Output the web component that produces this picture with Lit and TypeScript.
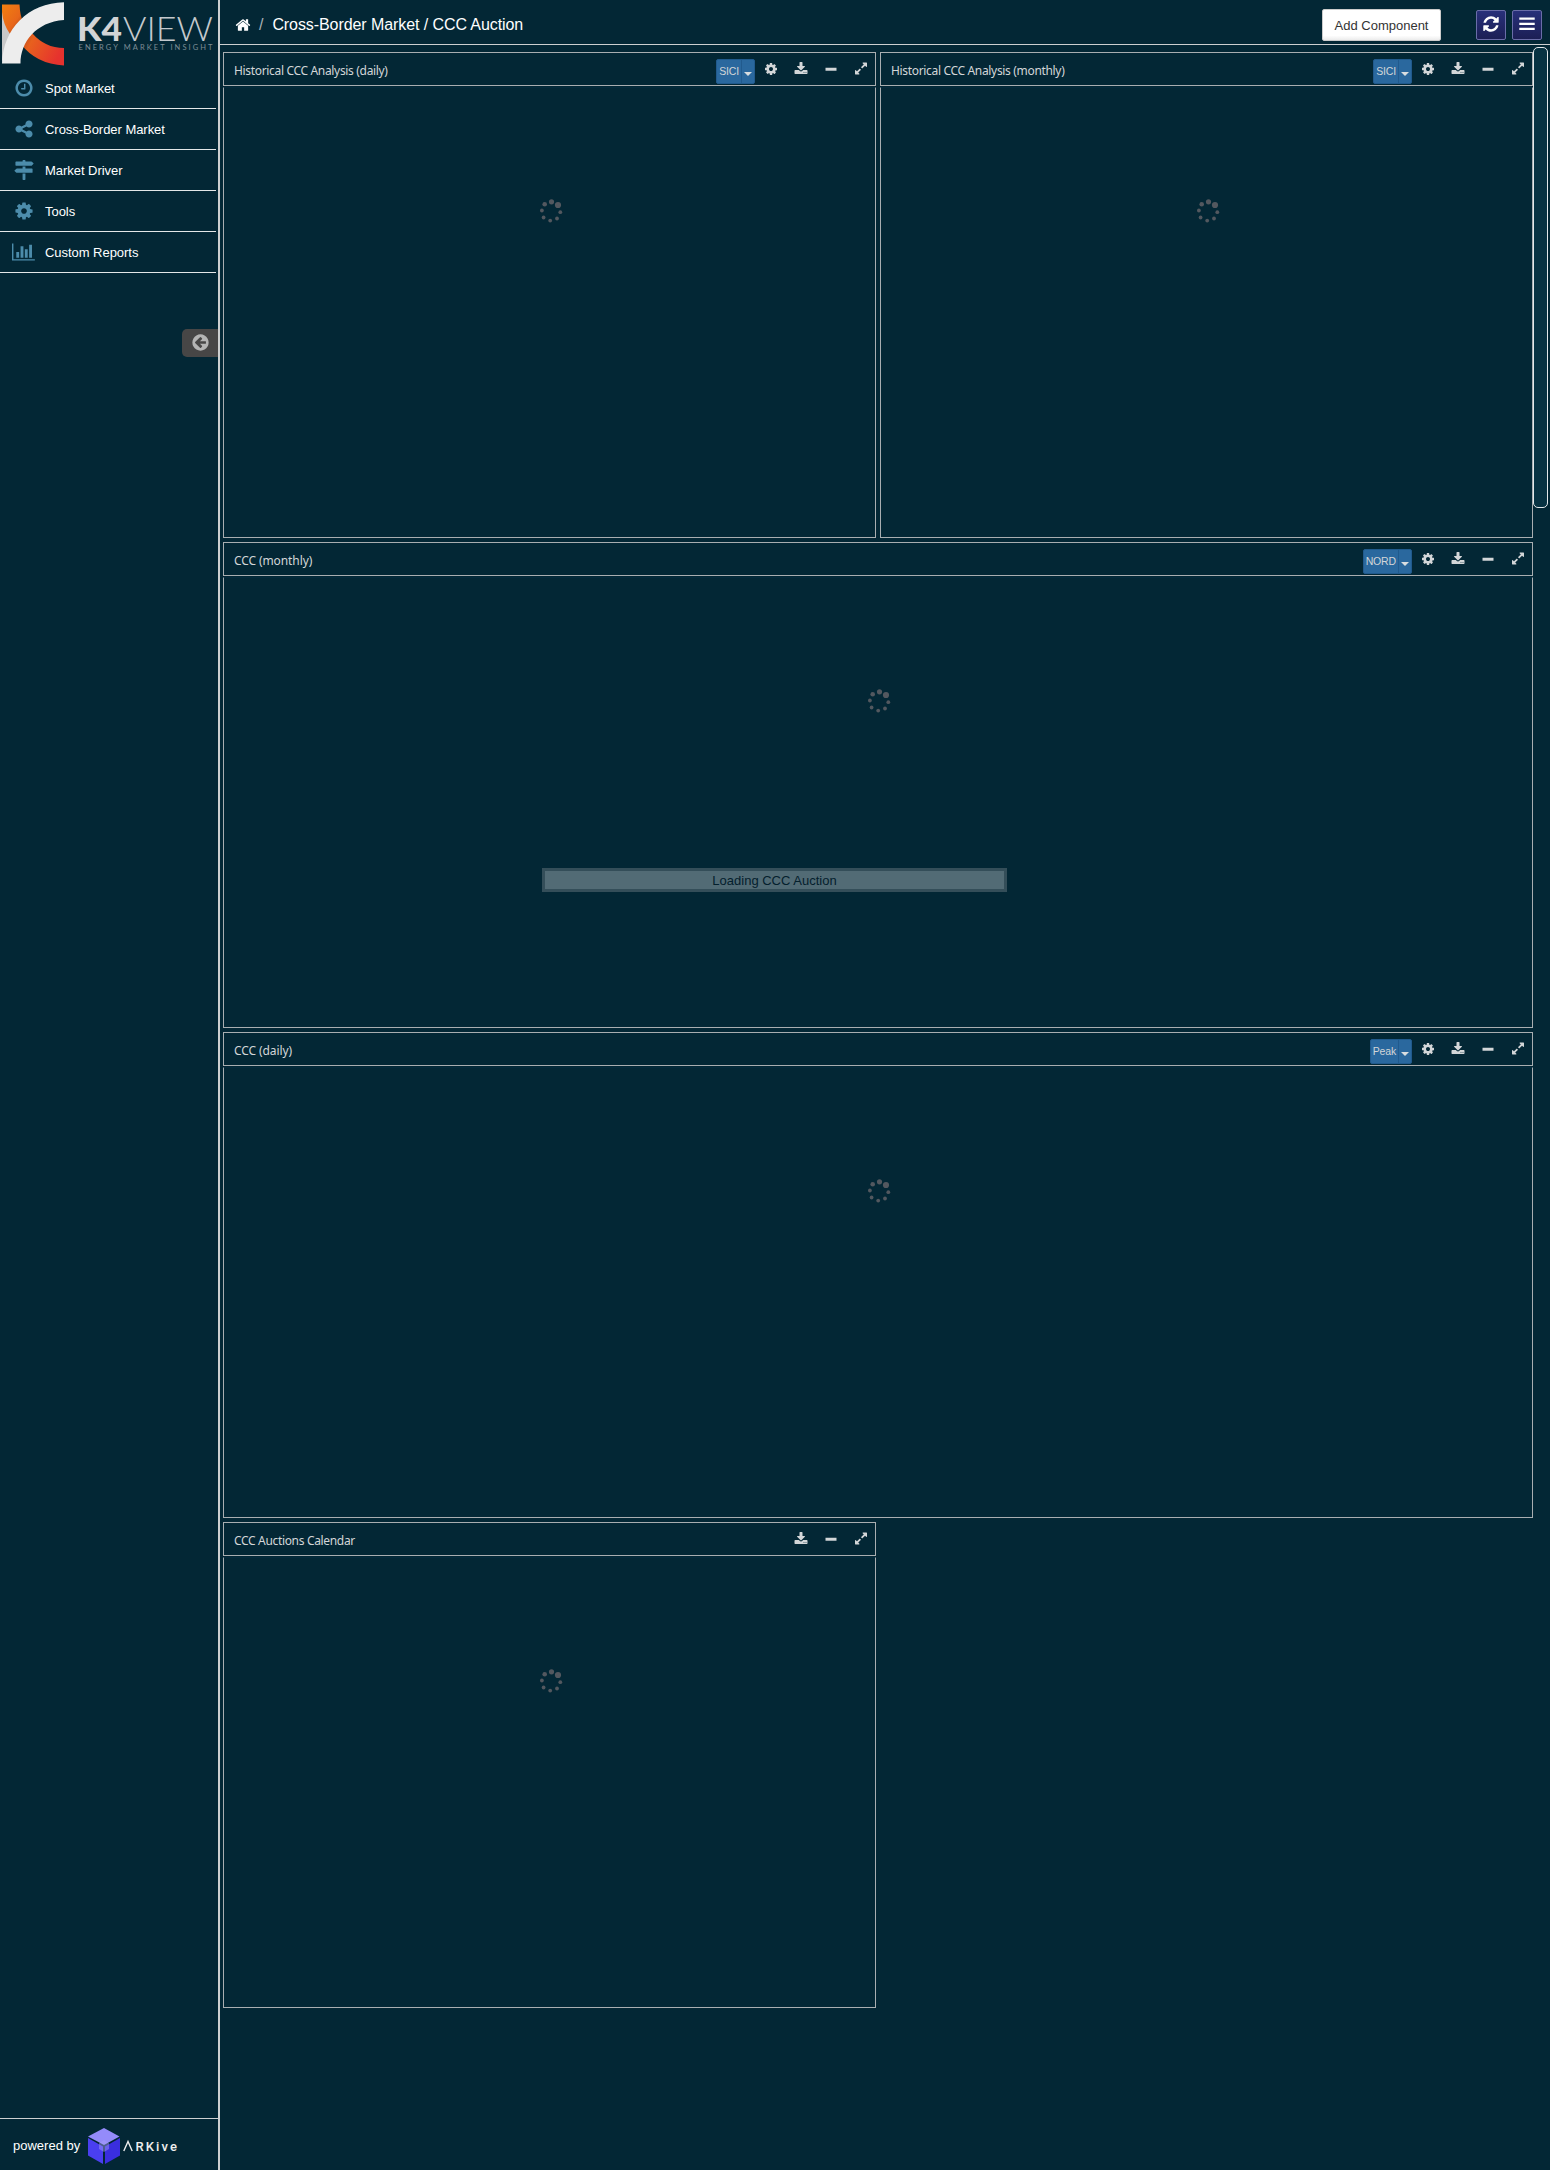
import { LitElement, html, css, svg, nothing } from "lit";
import { customElement, property } from "lit/decorators.js";

const ICONS: Record<string, string> = {
  home: "M1472 992v480q0 26-19 45t-45 19h-384v-384h-256v384h-384q-26 0-45-19t-19-45v-480q0-1 .5-3t.5-3l575-474 575 474q1 2 1 6zm223-69l-62 74q-8 9-21 11h-3q-13 0-21-7l-692-577-692 577q-12 8-24 7-13-2-21-11l-62-74q-8-10-7-23.5t11-21.5l719-599q32-26 76-26t76 26l244 204v-195q0-14 9-23t23-9h192q14 0 23 9t9 23v408l219 182q10 8 11 21.5t-7 23.5z",
  clock: "M1024 544v448q0 14-9 23t-23 9h-320q-14 0-23-9t-9-23v-64q0-14 9-23t23-9h224v-352q0-14 9-23t23-9h64q14 0 23 9t9 23zm416 352q0-148-73-273t-198-198-273-73-273 73-198 198-73 273 73 273 198 198 273 73 273-73 198-198 73-273zm224 0q0 209-103 385.5t-279.5 279.5-385.5 103-385.5-103-279.5-279.5-103-385.5 103-385.5 279.5-279.5 385.5-103 385.5 103 279.5 279.5 103 385.5z",
  share: "M1344 1024q133 0 226.5 93.5t93.5 226.5-93.5 226.5-226.5 93.5-226.5-93.5-93.5-226.5q0-12 2-34l-360-180q-92 86-218 86-133 0-226.5-93.5t-93.5-226.5 93.5-226.5 226.5-93.5q126 0 218 86l360-180q-2-22-2-34 0-133 93.5-226.5t226.5-93.5 226.5 93.5 93.5 226.5-93.5 226.5-226.5 93.5q-126 0-218-86l-360 180q2 22 2 34t-2 34l360 180q92-86 218-86z",
  signs: "M1745 297q10 10 10 23t-10 23l-141 141q-28 28-68 28h-1344q-26 0-45-19t-19-45v-256q0-26 19-45t45-19h576v-64q0-26 19-45t45-19h128q26 0 45 19t19 45v64h512q40 0 68 28zm-977 919h256v512q0 26-19 45t-45 19h-128q-26 0-45-19t-19-45v-512zm832-448q26 0 45 19t19 45v256q0 26-19 45t-45 19h-1344q-40 0-68-28l-141-141q-10-10-10-23t10-23l141-141q28-28 68-28h512v-192h256v192h576z",
  cog: "M1152 896q0-106-75-181t-181-75-181 75-75 181 75 181 181 75 181-75 75-181zm512-109v222q0 12-8 23t-20 13l-185 28q-19 54-39 91 35 50 107 138 10 12 10 25t-9 23q-27 37-99 108t-94 71q-12 0-26-9l-138-108q-44 23-91 38-16 136-29 186-7 28-36 28h-222q-14 0-24.5-8.5t-11.5-21.5l-28-184q-49-16-90-37l-141 107q-10 9-25 9-14 0-25-11-126-114-165-168-7-10-7-23 0-12 8-23 15-21 51-66.5t54-70.5q-27-50-41-99l-183-27q-13-2-21-12.5t-8-23.5v-222q0-12 8-23t19-13l186-28q14-46 39-92-40-57-107-138-10-12-10-24 0-10 9-23 26-36 98.5-107.5t94.5-71.5q13 0 26 10l138 107q44-23 91-38 16-136 29-186 7-28 36-28h222q14 0 24.5 8.5t11.5 21.5l28 184q49 16 90 37l142-107q9-9 24-9 13 0 25 10 129 119 165 170 7 8 7 22 0 12-8 23-15 21-51 66.5t-54 70.5q26 50 41 98l183 28q13 2 21 12.5t8 23.5z",
  chart: "M640 896v512h-256v-512h256zm384-512v1024h-256v-1024h256zm1024 1152v128h-2048v-1536h128v1408h1920zm-640-896v768h-256v-768h256zm384-384v1152h-256v-1152h256z",
  refresh: "M1639 1056q0 5-1 7-64 268-268 434.5t-478 166.5q-146 0-282.5-55t-243.5-157l-129 129q-19 19-45 19t-45-19-19-45v-448q0-26 19-45t45-19h448q26 0 45 19t19 45-19 45l-137 137q71 66 161 102t187 36q134 0 250-65t186-179q11-17 53-117 8-23 30-23h192q13 0 22.5 9.5t9.5 22.5zm25-800v448q0 26-19 45t-45 19h-448q-26 0-45-19t-19-45 19-45l138-138q-148-137-349-137-134 0-250 65t-186 179q-11 17-53 117-8 23-30 23h-199q-13 0-22.5-9.5t-9.5-22.5v-7q65-268 270-434.5t480-166.5q146 0 284 55.5t245 156.5l130-129q19-19 45-19t45 19 19 45z",
  bars: "M128 256h1536v224h-1536zM128 768h1536v224h-1536zM128 1280h1536v224h-1536z",
  back: "M1408 960v-128q0-26-19-45t-45-19h-502l189-189q19-19 19-45t-19-45l-91-91q-18-18-45-18t-45 18l-362 362-91 91q-18 18-18 45t18 45l91 91 362 362q18 18 45 18t45-18l91-91q18-18 18-45t-18-45l-189-189h502q26 0 45-19t19-45zm256-64q0 209-103 385.5t-279.5 279.5-385.5 103-385.5-103-279.5-279.5-103-385.5 103-385.5 279.5-279.5 385.5-103 385.5 103 279.5 279.5 103 385.5z",
  download: "M1344 1344q0-26-19-45t-45-19-45 19-19 45 19 45 45 19 45-19 19-45zm256 0q0-26-19-45t-45-19-45 19-19 45 19 45 45 19 45-19 19-45zm128-224v320q0 40-28 68t-68 28h-1472q-40 0-68-28t-28-68v-320q0-40 28-68t68-28h465l135 136q58 56 136 56t136-56l136-136h464q40 0 68 28t28 68zm-325-569q17 41-14 70l-448 448q-18 19-45 19t-45-19l-448-448q-31-29-14-70 17-39 59-39h256v-448q0-26 19-45t45-19h256q26 0 45 19t19 45v448h256q42 0 59 39z",
  minus: "M192 736h1408v384h-1408z",
  expand: "M883 1056q0 13-10 23l-332 332 144 144q19 19 19 45t-19 45-45 19h-448q-26 0-45-19t-19-45v-448q0-26 19-45t45-19 45 19l144 144 332-332q10-10 23-10t23 10l114 114q10 10 10 23zm781-864v448q0 26-19 45t-45 19-45-19l-144-144-332 332q-10 10-23 10t-23-10l-114-114q-10-10-10-23t10-23l332-332-144-144q-19-19-19-45t19-45 45-19h448q26 0 45 19t19 45z",
};

const icon = (name: string, size: number) => html`<svg
  width=${name === "chart" ? (size * 8) / 7 : size}
  height=${size}
  viewBox=${name === "chart" ? "0 0 2048 1792" : "0 0 1792 1792"}
  fill="currentColor"
>
  <path d=${ICONS[name]}></path>
</svg>`;

@customElement("dash-panel")
class DashPanel extends LitElement {
  @property() heading = "";
  @property() choice = "";

  static styles = css`
    :host {
      display: flex;
      flex-direction: column;
      height: 486px;
      box-sizing: border-box;
      font-family: "Noto Sans", "Open Sans", sans-serif;
      color: #d3d6d8;
    }
    svg {
      display: block;
    }
    .head {
      box-sizing: border-box;
      height: 34px;
      border: 1px solid #a9aeb1;
      display: flex;
      align-items: center;
      padding: 0 7px 0 10px;
    }
    .title {
      flex: 1;
      font-size: 12px;
      line-height: 16px;
      padding-top: 3px;
      white-space: nowrap;
    }
    .select {
      box-sizing: border-box;
      display: flex;
      height: 25px;
      margin: 5px 1px 0 0;
      background: #2a689e;
      border: 1px solid #215a8d;
      border-radius: 2px;
      font: 10.5px/22px "Liberation Sans", Arial, sans-serif;
      letter-spacing: -0.15px;
    }
    .value {
      padding: 0 2px 0 2px;
      border-right: 1px solid #215a8d;
    }
    .arrow {
      width: 12px;
      display: flex;
      justify-content: center;
      padding-top: 12px;
    }
    .arrow svg {
      width: 8px;
      height: 4px;
    }
    .tools {
      display: flex;
      height: 14px;
      margin-bottom: 1px;
    }
    .tool {
      width: 30px;
      display: flex;
      justify-content: center;
      align-items: center;
    }
    .tool:last-child {
      width: 14px;
      padding-left: 8px;
    }
    .body {
      flex: 1;
      box-sizing: border-box;
      margin-top: 1px;
      border: 1px solid #a9aeb1;
      border-top-color: #042b3d;
      display: flex;
      justify-content: center;
      padding: 111px 0 0 3px;
    }
  `;

  render() {
    const dots = [
      [11.5, 2.8, 2.6],
      [18, 6, 3.1],
      [20.3, 13.2, 1.9],
      [17, 19.5, 1.9],
      [10.2, 21.6, 1.9],
      [3.6, 18.5, 1.9],
      [1.9, 11.5, 1.9],
      [4.7, 5.2, 2.3],
    ];
    return html`
      <div class="head">
        <div class="title">${this.heading}</div>
        ${this.choice
          ? html`<div class="select">
              <span class="value">${this.choice}</span>
              <span class="arrow"><svg viewBox="0 0 8 4" fill="#d8dde0"><path d="M0 0h8l-4 4z" /></svg></span>
            </div>`
          : nothing}
        <div class="tools">
          ${this.choice ? html`<div class="tool">${icon("cog", 14)}</div>` : nothing}
          <div class="tool">${icon("download", 14)}</div>
          <div class="tool">${icon("minus", 14)}</div>
          <div class="tool">${icon("expand", 15)}</div>
        </div>
      </div>
      <div class="body">
        <svg width="23" height="24" viewBox="0 0 23 24" fill="#53585f">
          ${dots.map(([x, y, r]) => svg`<circle cx=${x} cy=${y} r=${r} />`)}
        </svg>
      </div>
    `;
  }
}

@customElement("app-root")
class AppRoot extends LitElement {
  static styles = css`
    :host {
      display: flex;
      position: relative;
      width: 1550px;
      height: 2170px;
      background: #032735;
      color: #fff;
      font-family: "Liberation Sans", Arial, sans-serif;
      overflow: hidden;
    }
    svg {
      display: block;
    }
    .side {
      box-sizing: border-box;
      width: 220px;
      border-right: 2px solid #cdcfd0;
      display: flex;
      flex-direction: column;
    }
    .logo {
      height: 68px;
    }
    .item {
      box-sizing: border-box;
      width: 216px;
      height: 41px;
      border-bottom: 1px solid #e4e7e8;
      display: flex;
      align-items: center;
      font-size: 13px;
      letter-spacing: -0.04px;
    }
    .item .ico {
      width: 45px;
      padding-left: 2px;
      box-sizing: border-box;
      display: flex;
      justify-content: center;
      color: #4c8cab;
    }
    .collapse {
      box-sizing: border-box;
      align-self: flex-end;
      margin-top: 56px;
      width: 36px;
      height: 28px;
      background: #474646;
      border-radius: 5px 0 0 5px;
      display: flex;
      align-items: center;
      justify-content: center;
      padding-bottom: 2px;
      color: #b4b4b4;
    }
    .foot {
      box-sizing: border-box;
      margin-top: auto;
      height: 52px;
      border-top: 1px solid #cdcfd0;
      display: flex;
      align-items: center;
      padding: 2px 0 0 13px;
      font-size: 13px;
    }
    .foot svg {
      margin: 2px 0 0 7px;
    }
    .main {
      flex: 1;
    }
    .top {
      box-sizing: border-box;
      height: 45px;
      border-bottom: 1px solid #cdcfd0;
      display: flex;
      align-items: center;
      padding: 6px 8px 0 15px;
      font-size: 16px;
    }
    .crumb {
      flex: 1;
      display: flex;
      align-items: center;
      white-space: pre;
      letter-spacing: -0.08px;
      padding-bottom: 1px;
    }
    .slash {
      color: #aab2b6;
      padding: 0 9px 0 8px;
    }
    .add {
      box-sizing: border-box;
      width: 119px;
      height: 32px;
      background: linear-gradient(#fff 85%, #ececec);
      border: 1px solid #ccc;
      border-radius: 2px;
      color: #333;
      font: 13px/31px "Liberation Sans", Arial, sans-serif;
      text-align: center;
      margin-right: 35px;
    }
    .square {
      box-sizing: border-box;
      width: 30px;
      height: 30px;
      border: 1px solid #6a6da8;
      border-radius: 2px;
      background: linear-gradient(#28307a, #1c1f55);
      display: flex;
      align-items: center;
      justify-content: center;
      padding-bottom: 2px;
      margin-left: 6px;
    }
    .square:nth-of-type(3) {
      margin-left: 0;
    }
    .grid {
      display: grid;
      grid-template-columns: 653px 653px;
      gap: 4px;
      padding: 7px 0 0 3px;
      letter-spacing: -0.33px;
    }
    .wide {
      grid-column: span 2;
      letter-spacing: -0.1px;
    }
    .thumb {
      position: absolute;
      box-sizing: border-box;
      left: 1533px;
      top: 47px;
      width: 15px;
      height: 461px;
      border: 1px solid #e3e8ea;
      border-radius: 5px;
      background: #073242;
    }
    .loading {
      position: absolute;
      box-sizing: border-box;
      left: 542px;
      top: 868px;
      width: 465px;
      height: 24px;
      border: 3px solid #344e59;
      background: #526b75;
      color: #04202d;
      font: 13px/19px "Liberation Sans", Arial, sans-serif;
      text-align: center;
    }
  `;

  render() {
    const menu = [
      ["clock", "Spot Market"],
      ["share", "Cross-Border Market"],
      ["signs", "Market Driver"],
      ["cog", "Tools"],
      ["chart", "Custom Reports"],
    ];
    return html`
      <div class="side">
        <div class="logo">
          <svg width="218" height="68" viewBox="0 0 218 68">
            <defs>
              <linearGradient id="a" x1="0" y1="0" x2="1" y2="1">
                <stop offset="0" stop-color="#f08010" />
                <stop offset="0.6" stop-color="#e8661a" />
                <stop offset="1" stop-color="#8a3a14" />
              </linearGradient>
              <linearGradient id="b" x1="0" y1="0" x2="1" y2="0.4">
                <stop offset="0" stop-color="#a8461a" />
                <stop offset="0.3" stop-color="#e8601e" />
                <stop offset="1" stop-color="#e6322e" />
              </linearGradient>
            </defs>
            <path d="M2 8L14 28L8 50L2 62z" fill="#c9c9c9" />
            <path d="M2 4.500H19.500Q20 15 23 22L10 34Q3 24 2 12z" fill="url(#a)" />
            <path d="M32 33Q45 48 64 48V65.500Q36 64 21 44z" fill="url(#b)" />
            <path d="M64 2.300V20C36 22 20.500 42 20.500 63.500H2C3 29 28 3 64 2.300z" fill="#ededed" />
            <text x="77" y="41" textLength="45" lengthAdjust="spacingAndGlyphs" font-family="Lato" font-weight="900" font-size="33" fill="#d2d4d6">K4</text>
            <text x="123" y="41" textLength="90" lengthAdjust="spacingAndGlyphs" font-family="Lato" font-weight="300" font-size="33" fill="#c4c9cd">VIEW</text>
            <text x="78.500" y="50" textLength="134" lengthAdjust="spacing" font-family="Lato" font-size="7.500" fill="#7d8d96">ENERGY MARKET INSIGHT</text>
          </svg>
        </div>
        ${menu.map(
          ([name, label]) => html`<div class="item"><span class="ico">${icon(name, 20)}</span>${label}</div>`
        )}
        <div class="collapse">${icon("back", 19)}</div>
        <div class="foot">
          powered by
          <svg width="94" height="40" viewBox="0 0 94 40">
            <path d="M17 1L32.500 9.500L17 18L1 9.500z" fill="#948bfa" />
            <path d="M1 11L16 19.500V37L1 28.500z" fill="#4a3ff0" />
            <path d="M33 11L18 19.500V37L33 28.500z" fill="#3a2edf" />
            <path d="M17 13L22 16V22L17 25L12 22V16z" fill="#a79ffa" opacity=".45" />
            <path d="M36.800 24L41 14.500L45.200 24" fill="none" stroke="#eee" stroke-width="1.400" />
            <text x="48.500" y="24" textLength="41.500" font-family="Roboto" font-weight="500" font-size="13" fill="#eee">RKive</text>
          </svg>
        </div>
      </div>
      <div class="main">
        <div class="top">
          <div class="crumb">${icon("home", 16)}<span class="slash">/</span>Cross-Border Market / CCC Auction</div>
          <div class="add">Add Component</div>
          <div class="square">${icon("refresh", 18)}</div>
          <div class="square">${icon("bars", 18)}</div>
        </div>
        <div class="grid">
          <dash-panel heading="Historical CCC Analysis (daily)" choice="SICI"></dash-panel>
          <dash-panel heading="Historical CCC Analysis (monthly)" choice="SICI"></dash-panel>
          <dash-panel class="wide" heading="CCC (monthly)" choice="NORD"></dash-panel>
          <dash-panel class="wide" heading="CCC (daily)" choice="Peak"></dash-panel>
          <dash-panel heading="CCC Auctions Calendar"></dash-panel>
        </div>
      </div>
      <div class="thumb"></div>
      <div class="loading">Loading CCC Auction</div>
    `;
  }
}
